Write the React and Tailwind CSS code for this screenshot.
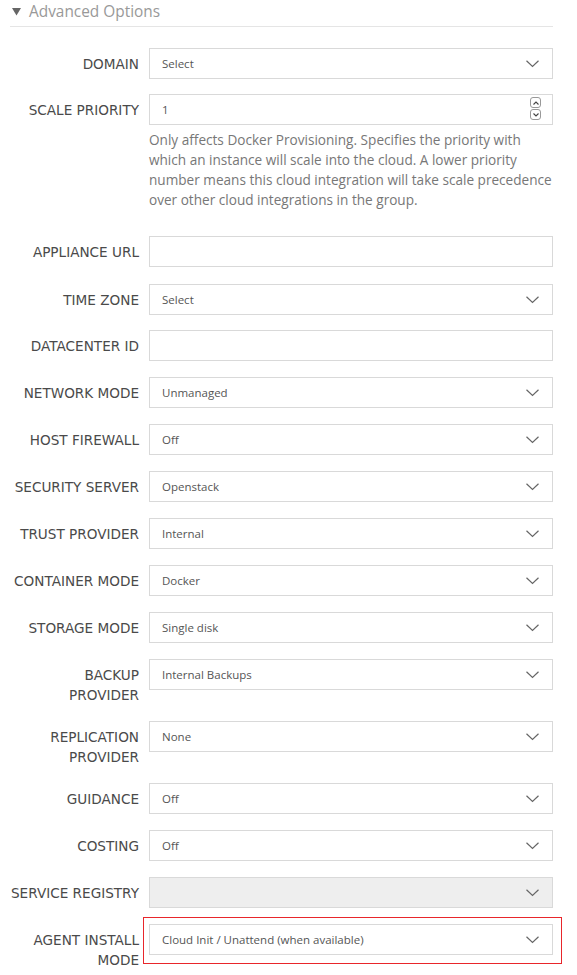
import React from "react";

const Chevron = () => (
  <svg width="13" height="8" viewBox="0 0 13 8" className="absolute right-[13px] top-1/2 -translate-y-1/2">
    <path d="M0.5 0.8 L6.5 6.5 L12.5 0.8" fill="none" stroke="#666" strokeWidth="1.2" />
  </svg>
);

const Label = ({ children }) => (
  <div className="w-[139px] shrink-0 pt-[6px] text-right text-[13.6px] leading-[20px] text-[#4a4a4a] font-['DejaVu_Sans',sans-serif]">
    {children}
  </div>
);

const Select = ({ value, disabled }) => (
  <div
    className={`relative h-[31px] w-[404px] border border-[#d9d9d9] flex items-center pl-[12px] pt-[1px] text-[11.5px] text-[#555] font-['Open_Sans',sans-serif] ${
      disabled ? "bg-[#eeeeee]" : "bg-white"
    }`}
  >
    {value}
    <Chevron />
  </div>
);

const Input = () => <div className="h-[31px] w-[404px] border border-[#d9d9d9] bg-white" />;

const Row = ({ label, children, className = "" }) => (
  <div className={`flex gap-[10px] ${className}`}>
    <Label>{label}</Label>
    <div>{children}</div>
  </div>
);

export default function App() {
  const selects = [
    ["NETWORK MODE", "Unmanaged"],
    ["HOST FIREWALL", "Off"],
    ["SECURITY SERVER", "Openstack"],
    ["TRUST PROVIDER", "Internal"],
    ["CONTAINER MODE", "Docker"],
    ["STORAGE MODE", "Single disk"],
  ];
  return (
    <div className="w-[577px] h-[975px] bg-white overflow-hidden">
      <div className="ml-[10px] mr-[24px] border-b border-[#e5e5e5] h-[27px] flex items-center">
        <svg width="9" height="8" viewBox="0 0 9 8" className="ml-[2px] mt-[-3px]">
          <path d="M0 0 L9 0 L4.5 7.5 Z" fill="#666" />
        </svg>
        <span className="ml-[8px] mt-[-3px] text-[15.4px] text-[#999] font-['Open_Sans',sans-serif]">Advanced Options</span>
      </div>
      <div className="mt-[21px] flex flex-col gap-[16px]">
        <Row label="DOMAIN" className="mb-[-1px]">
          <Select value="Select" />
        </Row>
        <div className="flex gap-[10px]">
          <Label>SCALE PRIORITY</Label>
          <div className="w-[404px]">
            <div className="relative h-[31px] border border-[#d9d9d9] flex items-center pl-[12px] pt-[1px] text-[11.5px] text-[#555] font-['Open_Sans',sans-serif]">
              1
              <div className="absolute right-[11px] top-[2px] flex flex-col gap-[1px]">
                <div className="w-[11px] h-[11px] border border-[#999] rounded-[3px] flex items-center justify-center">
                  <svg width="6" height="4" viewBox="0 0 6 4"><path d="M0.5 3.5 L3 1 L5.5 3.5" fill="none" stroke="#444" strokeWidth="1.1" /></svg>
                </div>
                <div className="w-[11px] h-[11px] border border-[#999] rounded-[3px] flex items-center justify-center">
                  <svg width="6" height="4" viewBox="0 0 6 4"><path d="M0.5 0.5 L3 3 L5.5 0.5" fill="none" stroke="#444" strokeWidth="1.1" /></svg>
                </div>
              </div>
            </div>
            <p className="mt-[5px] mb-[10px] text-[13.6px] leading-[20px] text-[#777] font-['Open_Sans',sans-serif]">
              Only affects Docker Provisioning. Specifies the priority with which an instance will scale into the cloud. A lower priority number means this cloud integration will take scale precedence over other cloud integrations in the group.
            </p>
          </div>
        </div>
        <Row label="APPLIANCE URL" className="mb-[1px]">
          <Input />
        </Row>
        <Row label="TIME ZONE" className="mb-[-1px]">
          <Select value="Select" />
        </Row>
        <Row label="DATACENTER ID">
          <Input />
        </Row>
        {selects.map(([l, v]) => (
          <Row key={l} label={l}>
            <Select value={v} />
          </Row>
        ))}
        <Row label={<>BACKUP<br />PROVIDER</>}>
          <Select value="Internal Backups" />
        </Row>
        <Row label={<>REPLICATION<br />PROVIDER</>}>
          <Select value="None" />
        </Row>
        <Row label="GUIDANCE">
          <Select value="Off" />
        </Row>
        <Row label="COSTING">
          <Select value="Off" />
        </Row>
        <Row label="SERVICE REGISTRY">
          <Select value="" disabled />
        </Row>
        <Row label={<>AGENT INSTALL<br />MODE</>}>
          <div className="relative">
            <Select value="Cloud Init / Unattend (when available)" />
            <div className="absolute left-[-6px] top-[-7px] w-[419px] h-[47px] border border-[#e8262b] pointer-events-none" />
          </div>
        </Row>
      </div>
    </div>
  );
}
